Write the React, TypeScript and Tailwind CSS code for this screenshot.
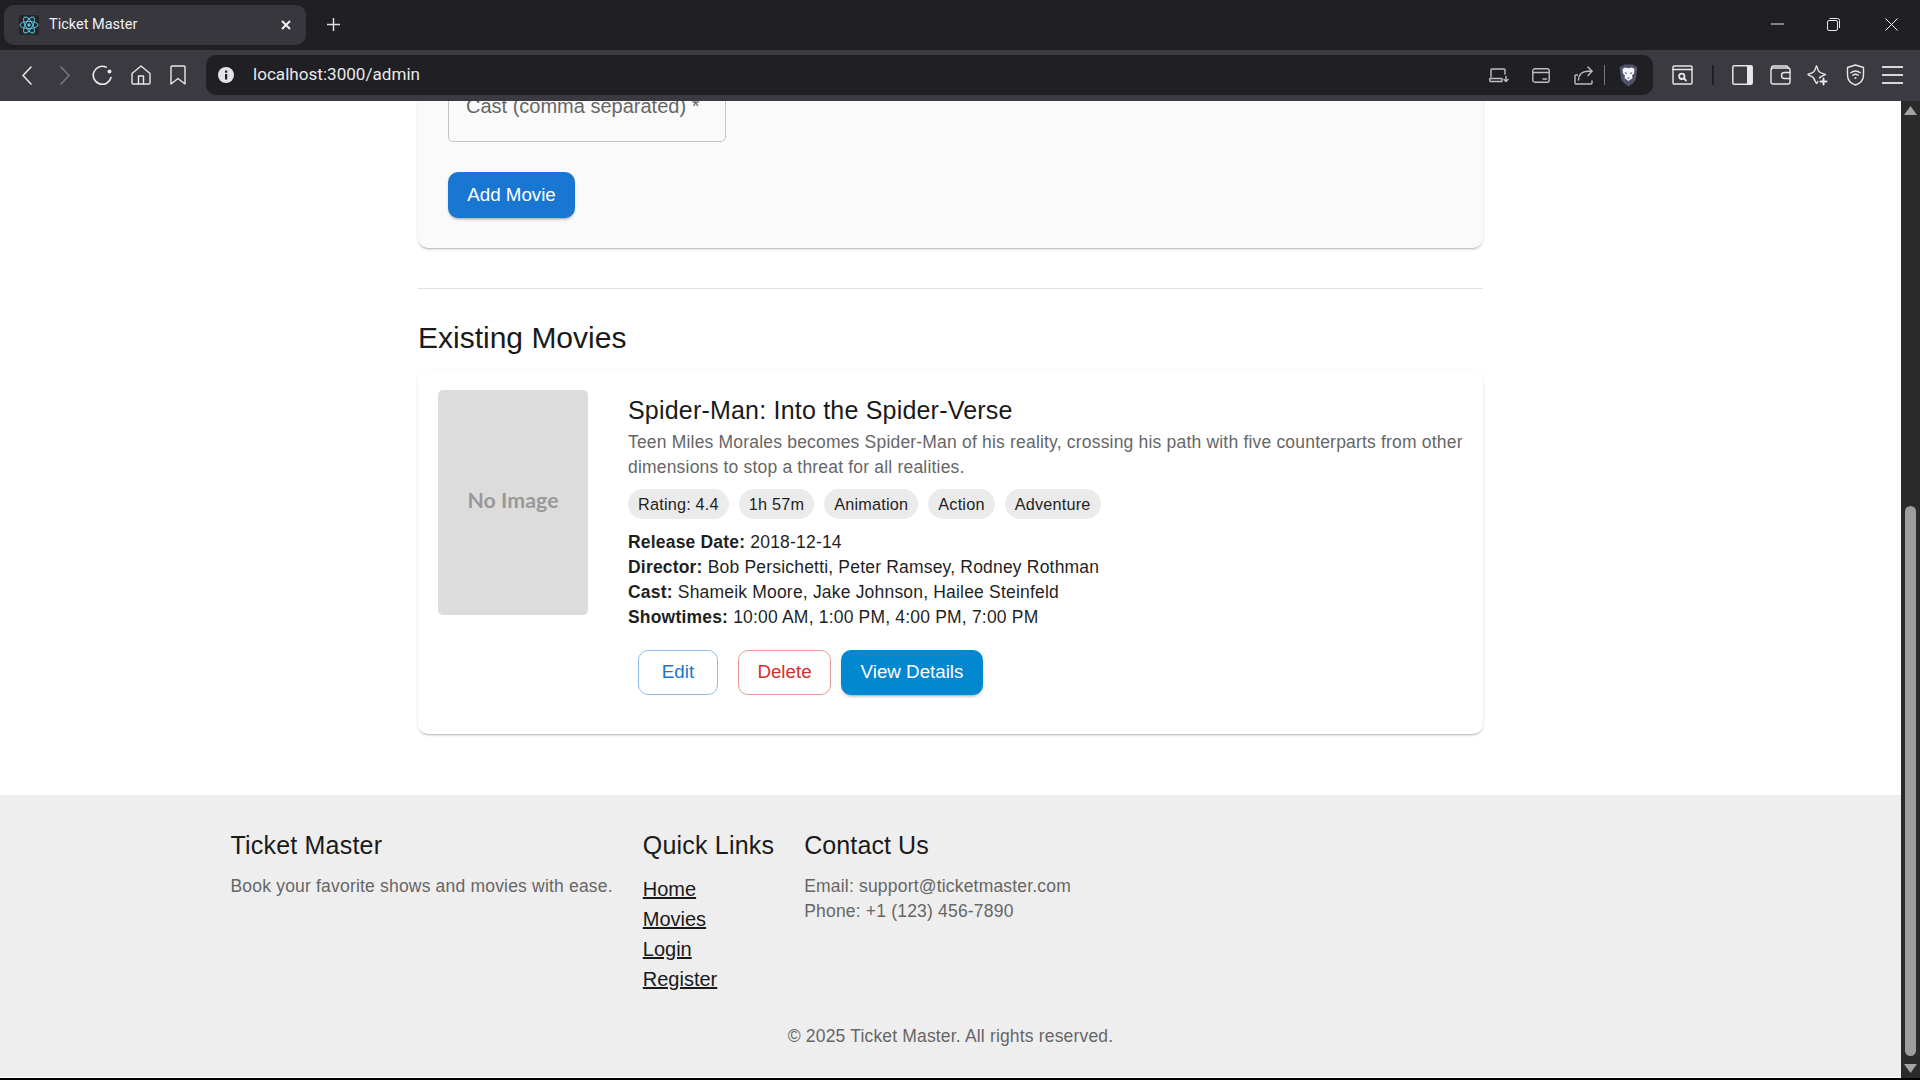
import React from "react";

const ic = { fill: "none", stroke: "#e8e8ea", strokeWidth: 1.4, strokeLinecap: "round", strokeLinejoin: "round" } as const;
const dim = { ...ic, stroke: "#bdbdc2" };

function ReactLogo() {
  return (
    <span className="flex h-[20px] w-[20px] items-center justify-center rounded-[2px] bg-[#25252a]">
      <svg width="20" height="20" viewBox="-12 -12 24 24" fill="none" stroke="#58c4dc" strokeWidth="1.2">
        <circle r="2.100" fill="#58c4dc" stroke="none" />
        <ellipse rx="10.800" ry="4.300" />
        <ellipse rx="10.800" ry="4.300" transform="rotate(60)" />
        <ellipse rx="10.800" ry="4.300" transform="rotate(120)" />
      </svg>
    </span>
  );
}
function Chevron({ right, color }: { right?: boolean; color: string }) {
  return (
    <svg width="10" height="19" viewBox="0 0 10 19" fill="none" stroke={color} strokeWidth="1.600" strokeLinecap="round" strokeLinejoin="round">
      <path d={right ? "M1 1l8 8.500-8 8.500" : "M9 1 1 9.500 9 18"} />
    </svg>
  );
}
function ReloadIcon() {
  return (
    <svg width="21" height="20" viewBox="0 0 21 20" fill="none" stroke="#e8e8ea" strokeWidth="1.700" strokeLinecap="round">
      <path d="M19 12.500A9 9 0 1 1 14 2.100" />
      <circle cx="17.500" cy="6.500" r="2" fill="#e8e8ea" stroke="none" />
    </svg>
  );
}
function HomeIcon() {
  return (
    <svg width="20" height="20" viewBox="0 0 20 20" {...ic}>
      <path d="M1 8.500 10 1l9 7.500V18a1 1 0 0 1-1 1H2a1 1 0 0 1-1-1z" />
      <path d="M7.500 19v-8h5v8" />
    </svg>
  );
}
function BookmarkIcon() {
  return (
    <svg width="16" height="20" viewBox="0 0 16 20" {...ic}>
      <path d="M2 1h12a1 1 0 0 1 1 1v17l-7-5.500L1 19V2a1 1 0 0 1 1-1z" />
    </svg>
  );
}
function InfoIcon() {
  return (
    <svg width="16" height="16" viewBox="0 0 16 16">
      <circle cx="8" cy="8" r="8" fill="#e4e4e6" />
      <rect x="7" y="7" width="2.200" height="5.500" fill="#1f1f24" />
      <rect x="7" y="3.500" width="2.200" height="2.200" fill="#1f1f24" />
    </svg>
  );
}
function LaptopIcon() {
  return (
    <svg width="20" height="15" viewBox="0 0 20 15" {...dim}>
      <path d="M2 9V1.800a.8.800 0 0 1 .8-.8h12.400a.8.800 0 0 1 .8.800V6" />
      <path d="M.8 10.500h12.200V13.500H1.500a.7.700 0 0 1-.7-.7z" />
      <path d="M17 8.500v5M15 11.500l2 2 2-2" />
    </svg>
  );
}
function CardIcon() {
  return (
    <svg width="18" height="15" viewBox="0 0 18 15" {...dim}>
      <rect x=".8" y=".8" width="16.400" height="13.400" rx="2" />
      <path d="M.8 4.500h16.400M11 11h3.500" />
    </svg>
  );
}
function ShareIcon() {
  return (
    <svg width="19" height="19" viewBox="0 0 19 19" {...dim}>
      <path d="M3.500 9H2a1 1 0 0 0-1 1v7a1 1 0 0 0 1 1h15a1 1 0 0 0 1-1v-2" opacity="1" />
      <path d="M4.500 14c0-5.500 4-8.800 9-8.800h4.500" />
      <path d="M14 1l4 4.200-4 4.200" />
    </svg>
  );
}
function BraveIcon() {
  return (
    <svg width="19" height="23" viewBox="0 0 19 23">
      <path d="M5 .5h9L15.500 2 18.500 3 17 14.500c-.6 3-4.500 6-7.500 8-3-2-6.900-5-7.500-8L.5 3l3-1z" fill="#50536a" />
      <path d="M3.500 5 6 3.500l3.500.8 3.500-.8L15.500 5 15 9.500l-2 2 .5 2.500-4 3-4-3 .5-2.500-2-2z" fill="#f6f6f8" />
      <path d="M5.500 8l2.500 1-.8 1.500zM13.500 8 11 9l.8 1.500zM8 13.500h3l-1.500 1.500z" fill="#50536a" />
    </svg>
  );
}
function TabSearchIcon() {
  return (
    <svg width="21" height="20" viewBox="0 0 21 20" {...ic}>
      <rect x="1" y="1" width="19" height="18" rx="1" />
      <path d="M1 4.500h19" />
      <circle cx="9.800" cy="11.300" r="2.700" strokeWidth="1.800" />
      <path d="M12 13.500l2 2" strokeWidth="1.800" />
    </svg>
  );
}
function SidebarIcon() {
  return (
    <svg width="21" height="20" viewBox="0 0 21 20">
      <rect x=".8" y=".8" width="19.400" height="18.400" rx="1.500" fill="none" stroke="#e4e4e6" strokeWidth="1.500" />
      <rect x="15" y=".8" width="5.200" height="18.400" fill="#e8e8ec" />
    </svg>
  );
}
function WalletIcon() {
  return (
    <svg width="21" height="20" viewBox="0 0 21 20" {...ic}>
      <path d="M1.500 4V3a2 2 0 0 1 2-2H16a2 2 0 0 1 2 2" />
      <rect x="1" y="3" width="19" height="16" rx="2" />
      <path d="M20 7.500h-5.500a3 3 0 0 0 0 6H20" />
    </svg>
  );
}
function SparkIcon() {
  return (
    <svg width="21" height="21" viewBox="0 0 21 21" {...ic}>
      <path d="M9.500 1c.5.200 1 4.500 3 6s4.500 1.800 6 2.500c-1.500 1-4.500 1.300-6 3.500M9.500 1c-.5.200-1 4.500-3 6S1.500 8.800 1 9.500c.5 1 4 1.300 5.500 3.500s2.500 5.500 3 5.500c.4 0 .8-1 1.300-2" />
      <path d="M16.500 13.500v6M13.500 16.500h6" strokeWidth="1.900" />
    </svg>
  );
}
function VpnIcon() {
  return (
    <svg width="19" height="22" viewBox="0 0 19 22" {...ic}>
      <path d="M9.500 1l8 2.500V11c0 5-3.500 8.500-8 10-4.500-1.500-8-5-8-10V3.500z" />
      <path d="M4.800 8.800c2.800-2.200 6.600-2.200 9.400 0M6.800 11.300c1.700-1.300 3.700-1.300 5.400 0" />
      <circle cx="9.500" cy="14" r="1" fill="#e8e8ea" stroke="none" />
    </svg>
  );
}
function MenuIcon() {
  return (
    <svg width="21" height="18" viewBox="0 0 21 18" stroke="#d8d8dc" strokeWidth="1.800">
      <path d="M0 1h21M0 9h21M0 17h21" />
    </svg>
  );
}

function Chip({ children }: { children: React.ReactNode }) {
  return <span className="flex h-[30px] items-center rounded-full bg-[#ebebeb] px-[10px] text-[16.25px] tracking-[0.2px] text-[#1f1f1f]">{children}</span>;
}

function Line({ label, value }: { label: string; value: string }) {
  return (
    <p className="text-[17.5px] leading-[25px] tracking-[0.19px] text-[#1f1f1f]">
      <strong className="font-bold">{label}</strong> {value}
    </p>
  );
}

export default function App() {
  return (
    <div className="flex h-[1080px] w-[1920px] flex-col overflow-hidden bg-white font-['Liberation_Sans',sans-serif]">
      {/* tab strip */}
      <div className="flex h-[50px] shrink-0 items-start bg-[#1f1f24] pl-[4px] pt-[5px]">
        <div className="flex h-[40px] w-[302px] items-center rounded-[10px] bg-[#37373d] pl-[15px] font-['Roboto',sans-serif] text-[14.5px] text-[#f0f0f2]">
          <ReactLogo />
          <span className="ml-[10px] flex-1">Ticket Master</span>
          <svg width="10" height="10" viewBox="0 0 10 10" stroke="#f4f4f4" strokeWidth="2" className="mr-[15px]"><path d="M1 1l8 8M9 1 1 9" /></svg>
        </div>
        <svg width="13" height="13" viewBox="0 0 13 13" stroke="#e0e0e2" strokeWidth="1.500" className="ml-[21px] mt-[13px]"><path d="M6.500 0v13M0 6.500h13" /></svg>
        <div className="flex-1" />
        <svg width="13" height="2" stroke="#e8e8ea" className="mr-[43px] mt-[18px]"><path d="M0 1h13" strokeWidth="1" /></svg>
        <svg width="13" height="13" className="mr-[45px] mt-[13px]" viewBox="0 0 13 13" fill="none" stroke="#e8e8ea"><rect x=".5" y="2.500" width="10" height="10" rx="1.500" /><path d="M2.500.5h8a2 2 0 0 1 2 2V10" /></svg>
        <svg width="13" height="13" viewBox="0 0 13 13" stroke="#f0f0f0" className="mr-[22px] mt-[13px]"><path d="M.5.5l12 12M12.500.5l-12 12" /></svg>
      </div>
      {/* toolbar */}
      <div className="flex h-[51px] shrink-0 items-center bg-[#3a3a40] pb-[1px] pl-[22px]">
        <Chevron color="#e8e8ea" />
        <span className="ml-[28px] flex"><Chevron right color="#77777c" /></span>
        <span className="ml-[22px] flex"><ReloadIcon /></span>
        <span className="ml-[18px] flex"><HomeIcon /></span>
        <span className="ml-[19px] flex"><BookmarkIcon /></span>
        <div className="ml-[20px] flex h-[40px] w-[1447px] items-center rounded-[10px] bg-[#1f1f24] pl-[12px]">
          <InfoIcon />
          <span className="ml-[19px] flex-1 font-['Roboto',sans-serif] text-[17.1px] text-[#e8e8ea]">localhost:3000/admin</span>
          <LaptopIcon />
          <span className="ml-[23px] flex"><CardIcon /></span>
          <span className="ml-[24px] flex"><ShareIcon /></span>
          <span className="ml-[11px] h-[20px] w-px bg-[#77777c]" />
          <span className="ml-[14px] mr-[15px] flex"><BraveIcon /></span>
        </div>
        <span className="ml-[19px] flex"><TabSearchIcon /></span>
        <span className="ml-[19px] h-[20px] w-[2px] bg-[#1f1f24]" />
        <span className="ml-[18px] flex"><SidebarIcon /></span>
        <span className="ml-[17px] flex"><WalletIcon /></span>
        <span className="ml-[16px] flex"><SparkIcon /></span>
        <span className="ml-[18px] flex"><VpnIcon /></span>
        <span className="ml-[17px] flex"><MenuIcon /></span>
      </div>
      {/* page + scrollbar */}
      <div className="flex min-h-0 flex-1">
        <div className="min-w-0 flex-1 overflow-hidden bg-white">
          <main className="mx-auto w-[1065px]">
            <section className="-mt-[59px] rounded-[10px] bg-[#fafafa] px-[30px] pb-[30px] pt-[60px] shadow-[0_2px_2px_-1px_rgba(0,0,0,0.2),0_1px_3px_0_rgba(0,0,0,0.14)]">
              <div className="-mt-[60px] h-[100px] w-[278px] rounded-[5px] border border-[#c4c4c4] px-[17px] pt-[52px] text-[20px] leading-[23px] text-[#666666]">
                Cast (comma separated) *
              </div>
              <button className="mt-[30px] h-[46px] w-[127px] rounded-[10px] bg-[#1976d2] text-[18.75px] text-white shadow-[0_3px_2px_-2px_rgba(0,0,0,0.2),0_2px_3px_0_rgba(0,0,0,0.14)]">
                Add Movie
              </button>
            </section>
            <hr className="mt-[40px] border-t border-[#e2e2e2]" />
            <h2 className="mt-[31px] text-[30px] leading-[36px] text-[#1a1a1a]">Existing Movies</h2>
            <section className="mt-[14px] flex h-[364px] rounded-[10px] bg-white p-[20px] shadow-[0_2px_2px_-1px_rgba(0,0,0,0.2),0_1px_3px_0_rgba(0,0,0,0.12)]">
              <div className="flex h-[225px] w-[150px] shrink-0 items-center justify-center rounded-[5px] bg-[#dcdcdc] pb-[4px] font-['Lato',sans-serif] text-[21.4px] font-bold text-[#999999]">
                No Image
              </div>
              <div className="ml-[40px] min-w-0 flex-1">
                <h3 className="mt-[1px] text-[25px] leading-[39px] tracking-[0.2px] text-[#1a1a1a]">Spider-Man: Into the Spider-Verse</h3>
                <p className="text-[17.5px] leading-[25px] tracking-[0.19px] text-[#666666]">
                  Teen Miles Morales becomes Spider-Man of his reality, crossing his path with five counterparts from other dimensions to stop a threat for all realities.
                </p>
                <div className="mt-[9px] flex gap-[10px]">
                  <Chip>Rating: 4.4</Chip>
                  <Chip>1h 57m</Chip>
                  <Chip>Animation</Chip>
                  <Chip>Action</Chip>
                  <Chip>Adventure</Chip>
                </div>
                <div className="mt-[11px]">
                  <Line label="Release Date:" value="2018-12-14" />
                  <Line label="Director:" value="Bob Persichetti, Peter Ramsey, Rodney Rothman" />
                  <Line label="Cast:" value="Shameik Moore, Jake Johnson, Hailee Steinfeld" />
                  <Line label="Showtimes:" value="10:00 AM, 1:00 PM, 4:00 PM, 7:00 PM" />
                </div>
                <div className="ml-[10px] mt-[20px] flex h-[45px] items-stretch text-[18.75px]">
                  <button className="w-[80px] rounded-[10px] border border-[#90bfee] text-[#1976d2]">Edit</button>
                  <button className="ml-[20px] w-[93px] rounded-[10px] border border-[#eb9a9a] text-[#d32f2f]">Delete</button>
                  <button className="ml-[10px] w-[142px] rounded-[10px] bg-[#0288d1] text-white shadow-[0_3px_2px_-2px_rgba(0,0,0,0.2),0_2px_3px_0_rgba(0,0,0,0.14)]">View Details</button>
                </div>
              </div>
            </section>
          </main>
          <footer className="mt-[61px] h-[282px] bg-[#eeeeee] pt-[35px]">
            <div className="mx-auto w-[1440px]">
              <div className="flex gap-[30px]">
                <div>
                  <h4 className="text-[25px] leading-[30px] tracking-[0.2px] text-[#1a1a1a]">Ticket Master</h4>
                  <p className="mt-[14px] text-[17.5px] leading-[25px] tracking-[0.19px] text-[#666666]">Book your favorite shows and movies with ease.</p>
                </div>
                <div>
                  <h4 className="text-[25px] leading-[30px] tracking-[0.2px] text-[#1a1a1a]">Quick Links</h4>
                  <ul className="mt-[14px] text-[20px] leading-[30px] text-[#1a1a1a] underline">
                    <li>Home</li>
                    <li>Movies</li>
                    <li>Login</li>
                    <li>Register</li>
                  </ul>
                </div>
                <div>
                  <h4 className="text-[25px] leading-[30px] tracking-[0.1px] text-[#1a1a1a]">Contact Us</h4>
                  <p className="mt-[14px] text-[17.5px] leading-[25px] tracking-[0.19px] text-[#666666]">Email: support@ticketmaster.com</p>
                  <p className="text-[17.5px] leading-[25px] tracking-[0.19px] text-[#666666]">Phone: +1 (123) 456-7890</p>
                </div>
              </div>
              <p className="mt-[30px] text-center text-[17.5px] leading-[25px] tracking-[0.17px] text-[#666666]">© 2025 Ticket Master. All rights reserved.</p>
            </div>
          </footer>
        </div>
        <aside className="flex w-[19px] shrink-0 flex-col items-center bg-[#2b2b2b] pt-[5px]">
          <svg width="13" height="9" viewBox="0 0 13 9"><path d="M6.500 0 13 9H0z" fill="#a3a3a3" /></svg>
          <div className="mt-[391px] w-[11px] flex-1 rounded-full bg-[#9e9e9e]" />
          <svg className="mb-[5px] mt-[8px]" width="13" height="9" viewBox="0 0 13 9"><path d="M0 0h13L6.500 9z" fill="#a3a3a3" /></svg>
        </aside>
      </div>
      <div className="h-[2px] shrink-0 bg-black" />
    </div>
  );
}
